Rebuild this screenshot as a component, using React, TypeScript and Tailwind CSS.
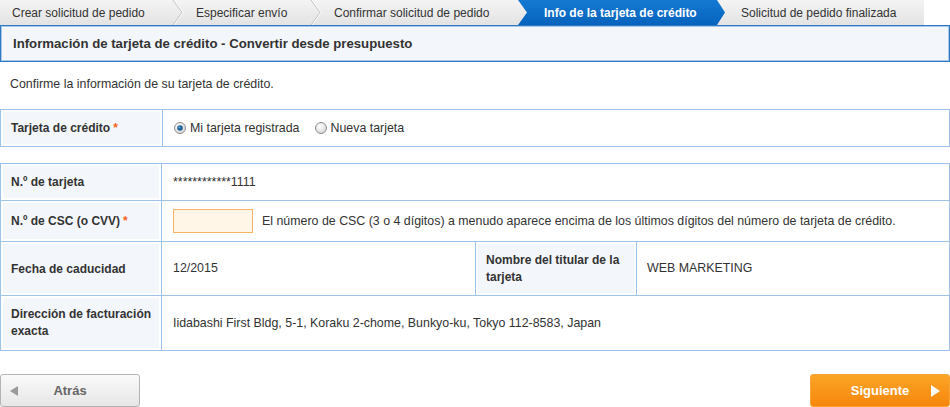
import React from 'react';

const Chevron = () => (
    <svg width="12" height="25" viewBox="0 0 12 25" className="shrink-0">
        <polyline points="1,0 10,12.5 1,25" fill="none" stroke="#ffffff" strokeWidth="1" transform="translate(1,0)" />
        <polyline points="1,0 10,12.5 1,25" fill="none" stroke="#c4c4c4" strokeWidth="1" />
    </svg>
);

const Radio = ({ checked }: { checked?: boolean }) => (
    <svg width="12" height="12" viewBox="0 0 12 12" className="shrink-0">
        <defs>
            <radialGradient id={checked ? 'rOn' : 'rOff'} cx="0.4" cy="0.35" r="0.7">
                <stop offset="0" stopColor="#ffffff" />
                <stop offset="1" stopColor="#d4d4d4" />
            </radialGradient>
        </defs>
        <circle cx="6" cy="6" r="5.5" fill={`url(#${checked ? 'rOn' : 'rOff'})`} stroke="#8f8f8f" />
        {checked && <circle cx="6" cy="6" r="2.8" fill="#1b5f94" />}
        {checked && <circle cx="5.4" cy="5.4" r="1" fill="#6fb0e0" />}
    </svg>
);

const Req = () => <span className="text-[#f26522] ml-[3px]">*</span>;

const App: React.FC = () => {
    return (
        <div className="w-[950px] h-[407px] bg-white text-[12.4px] text-[#333] font-['Liberation_Sans',Arial,sans-serif] overflow-hidden">
            {/* steps */}
            <div className="flex h-[25px] w-[924px] items-center bg-gradient-to-b from-[#f4f4f4] to-[#e3e3e3] text-[12px]">
                <div className="flex items-center h-full w-[184px]">
                    <span className="pl-[12px] flex-1">Crear solicitud de pedido</span>
                    <Chevron />
                </div>
                <div className="flex items-center h-full w-[138px]">
                    <span className="pl-[12px] flex-1">Especificar envío</span>
                    <Chevron />
                </div>
                <div className="flex items-center h-full w-[196px]">
                    <span className="pl-[12px] flex-1">Confirmar solicitud de pedido</span>
                </div>
                <div className="flex items-center h-full w-[207px] pl-[26px] bg-gradient-to-b from-[#1479d2] to-[#0663bd] text-white font-bold [clip-path:polygon(0_0,calc(100%_-_8px)_0,100%_50%,calc(100%_-_8px)_100%,0_100%,9px_50%)]">
                    Info de la tarjeta de crédito
                </div>
                <div className="pl-[16px]">Solicitud de pedido finalizada</div>
            </div>

            {/* title */}
            <div className="h-[37px] border border-[#2f78c4] bg-[#f3f7fb] shadow-[inset_0_0_0_1px_#a8c8ea] flex items-center px-[12px]">
                <h1 className="text-[13.2px] font-bold text-[#333]">Información de tarjeta de crédito - Convertir desde presupuesto</h1>
            </div>

            <p className="pl-[10px] pt-[14px] pb-[17px] leading-[16px]">Confirme la información de su tarjeta de crédito.</p>

            {/* tarjeta */}
            <div className="grid grid-cols-[162px_1fr] h-[38px] border border-[#9fc3e7]">
                <div className="bg-[#f3f7fb] shadow-[inset_0_0_0_2px_#fff] border-r border-[#9fc3e7] flex items-center pl-[10px] font-bold text-[12px]">
                    Tarjeta de crédito<Req />
                </div>
                <div className="flex items-center pl-[11px]">
                    <label className="flex items-center gap-[4px]">
                        <Radio checked />
                        <span>Mi tarjeta registrada</span>
                    </label>
                    <label className="flex items-center gap-[4px] ml-[15px]">
                        <Radio />
                        <span>Nueva tarjeta</span>
                    </label>
                </div>
            </div>

            {/* datos */}
            <div className="mt-[16px] border border-[#9fc3e7] grid grid-cols-[161px_314px_161px_1fr]">
                <div className="h-[37px] bg-[#f3f7fb] shadow-[inset_0_0_0_2px_#fff] border-r border-b border-[#9fc3e7] flex items-center pl-[10px] font-bold text-[12px]">
                    N.º de tarjeta
                </div>
                <div className="col-span-3 border-b border-[#9fc3e7] flex items-center pl-[11px]">
                    ************1111
                </div>

                <div className="h-[41px] bg-[#f3f7fb] shadow-[inset_0_0_0_2px_#fff] border-r border-b border-[#9fc3e7] flex items-center pl-[10px] font-bold text-[12px]">
                    N.º de CSC (o CVV)<Req />
                </div>
                <div className="col-span-3 border-b border-[#9fc3e7] flex items-center pl-[11px]">
                    <input className="w-[80px] h-[24px] border border-[#f7b361] bg-[#fff6e8] outline-none" />
                    <span className="ml-[9px]">El número de CSC (3 o 4 dígitos) a menudo aparece encima de los últimos dígitos del número de tarjeta de crédito.</span>
                </div>

                <div className="h-[54px] bg-[#f3f7fb] shadow-[inset_0_0_0_2px_#fff] border-r border-b border-[#9fc3e7] flex items-center pl-[10px] font-bold text-[12px]">
                    Fecha de caducidad
                </div>
                <div className="border-r border-b border-[#9fc3e7] flex items-center pl-[11px]">12/2015</div>
                <div className="bg-[#f3f7fb] shadow-[inset_0_0_0_2px_#fff] border-r border-b border-[#9fc3e7] flex items-center pl-[10px] pr-[8px] font-bold text-[12px] leading-[17px]">
                    Nombre del titular de la tarjeta
                </div>
                <div className="border-b border-[#9fc3e7] flex items-center pl-[10px]">WEB MARKETING</div>

                <div className="h-[54px] bg-[#f3f7fb] shadow-[inset_0_0_0_2px_#fff] border-r border-[#9fc3e7] flex items-center pl-[10px] pr-[4px] font-bold text-[12px] leading-[17px]">
                    Dirección de facturación exacta
                </div>
                <div className="col-span-3 flex items-center pl-[11px]">
                    Iidabashi First Bldg, 5-1, Koraku 2-chome, Bunkyo-ku, Tokyo 112-8583, Japan
                </div>
            </div>

            {/* botones */}
            <div className="mt-[23px] flex justify-between">
                <button className="relative w-[140px] h-[33px] rounded-[3px] border border-[#b3b3b3] bg-gradient-to-b from-[#fafafa] to-[#e6e6e6] text-[13px] font-bold text-[#666] flex items-center justify-center">
                    <span className="absolute left-[9px] top-[11px] w-0 h-0 border-y-[5px] border-y-transparent border-r-[8px] border-r-[#999]" />
                    Atrás
                </button>
                <button className="relative w-[140px] h-[33px] rounded-[3px] border border-[#f6a33a] bg-gradient-to-b from-[#fba525] to-[#f6860a] text-[13px] font-bold text-white flex items-center justify-center">
                    Siguiente
                    <span className="absolute right-[9px] top-[10px] w-0 h-0 border-y-[6px] border-y-transparent border-l-[9px] border-l-white" />
                </button>
            </div>
        </div>
    );
};

export default App;
